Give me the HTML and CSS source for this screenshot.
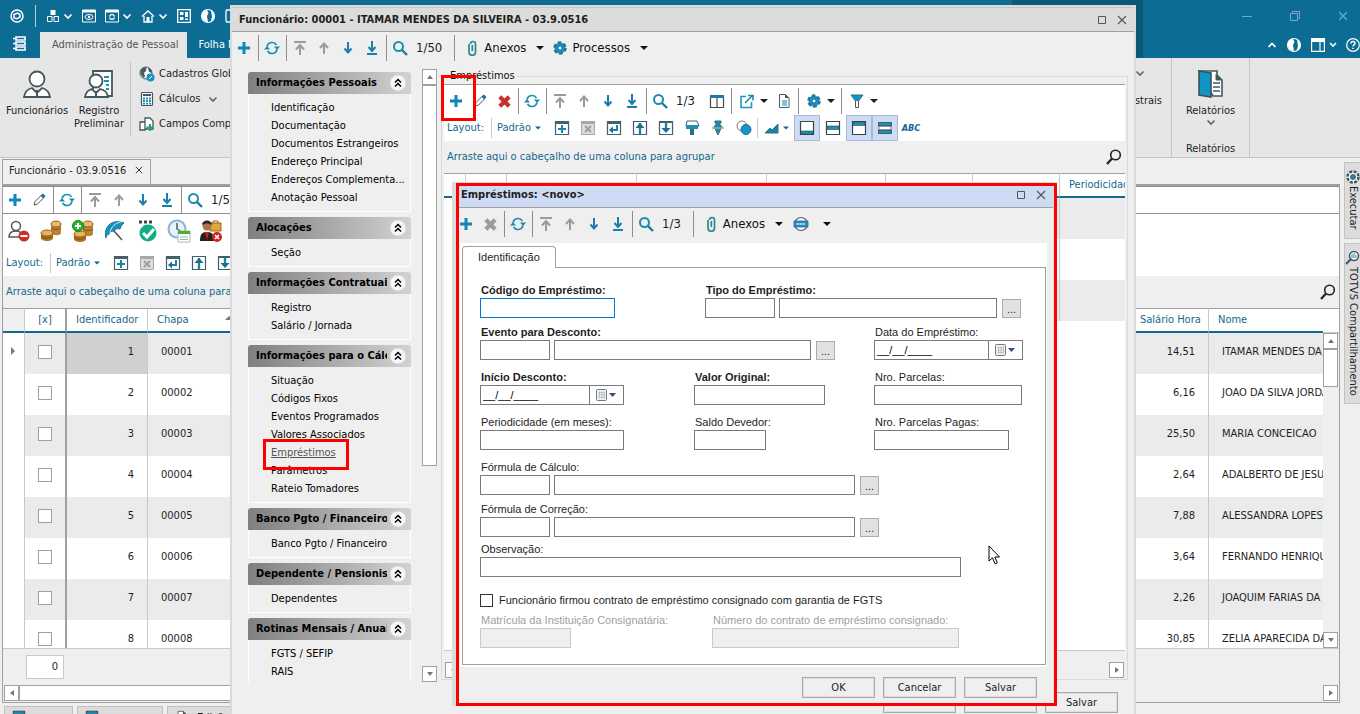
FILE: index.html
```html
<!DOCTYPE html>
<html lang="pt-BR">
	<head>
		<meta charset="utf-8">
		<title>Administração de Pessoal</title>
		<link rel="stylesheet" href="styles.css">
	</head>
	<body>
		<svg class="sprite" aria-hidden="true">
			<symbol id="i-plus" viewBox="0 0 16 16"><path d="M8 2v12M2 8h12" stroke="#0f86b8" stroke-width="3"/></symbol>
			<symbol id="i-pencil" viewBox="0 0 16 16"><path d="M3 13l1-3.500 6-6 2.500 2.500-6 6z" fill="#fff" stroke="#555"/><path d="M10 3.500L12 2l2 2-1.500 2z" fill="#1c7ea8" stroke="#1c6f96"/></symbol>
			<symbol id="i-del" viewBox="0 0 16 16"><path d="M3 3l10 10M13 3L3 13" stroke="currentColor" stroke-width="4.500"/></symbol>
			<symbol id="i-refresh" viewBox="0 0 16 16"><path d="M3 6.500a5.200 5.200 0 0 1 9.500-1.500M13 9.500a5.200 5.200 0 0 1-9.500 1.500" fill="none" stroke="#1b8fb0" stroke-width="1.600"/><path d="M10 6.500h6l-3 3.500zM0 9.500h6L3 6z" fill="#1b8f9c"/></symbol>
			<symbol id="i-first" viewBox="0 0 16 16"><path d="M2 2h12M8 15V6M4 9.500L8 5l4 4.500" fill="none" stroke="#9b9b9b" stroke-width="2"/></symbol>
			<symbol id="i-up" viewBox="0 0 16 16"><path d="M8 14V4M4 8l4-4.500L12 8" fill="none" stroke="#9b9b9b" stroke-width="2"/></symbol>
			<symbol id="i-down" viewBox="0 0 16 16"><path d="M8 2v10M4.500 8.500L8 12.500l3.500-4" fill="none" stroke="#1c7fab" stroke-width="2"/></symbol>
			<symbol id="i-last" viewBox="0 0 16 16"><path d="M8 1v9M4.500 7L8 11l3.500-4M3 14h10" fill="none" stroke="#1c7fab" stroke-width="2"/></symbol>
			<symbol id="i-search" viewBox="0 0 16 16"><circle cx="6.500" cy="6.500" r="4.500" fill="none" stroke="#1b8fa8" stroke-width="2"/><path d="M10 10l5 5" stroke="#1c7b9c" stroke-width="2.400"/></symbol>
			<symbol id="i-clip" viewBox="0 0 16 16"><path d="M5 4v8a3 3 0 0 0 6.500 0V4a2.500 2.500 0 0 0-5 0M8.300 5v6" fill="none" stroke="#2d8793" stroke-width="1.700"/></symbol>
			<symbol id="i-gear" viewBox="0 0 16 16"><circle cx="8" cy="8" r="5.500" fill="#0f96c4"/><circle cx="8" cy="8" r="5.500" fill="none" stroke="#2b7396" stroke-width="2.500" stroke-dasharray="3.500 2.260"/><circle cx="8" cy="8" r="2" fill="#fff" stroke="#2b6d8c"/></symbol>
			<symbol id="i-caret" viewBox="0 0 8 8"><path d="M0 2h8L4 6z" fill="currentColor"/></symbol>
			<symbol id="i-cols" viewBox="0 0 16 16"><path d="M1.500 2.500h13v12h-13zM8 4v10" fill="#fff" stroke="#4a4a4a" stroke-width="1.200"/><path d="M1 2h14v3H1z" fill="#1c7ba5"/></symbol>
			<symbol id="i-export" viewBox="0 0 16 16"><path d="M7 3.500H2v11h10.500V9" fill="none" stroke="#1b9cbd" stroke-width="1.600"/><path d="M6 10l7-7M9 2.500h5v5" fill="none" stroke="#1b8fb0" stroke-width="1.600"/></symbol>
			<symbol id="i-doc" viewBox="0 0 16 16"><path d="M3.500 1.500h6l3.500 3.500v9.500H3.500z" fill="#fff" stroke="#4f5b60"/><path d="M9 1l4 4H9z" fill="#4f5b60"/><path d="M6 7h5v6H6z" fill="#7cc6d6"/></symbol>
			<symbol id="i-funnel" viewBox="0 0 16 16"><path d="M2 2h12L9.500 8h-3z" fill="#0f96c4" stroke="#2b6d8c"/><path d="M6.500 8v6.500h3V8" fill="#fff" stroke="#555"/></symbol>
			<symbol id="i-mag" viewBox="0 0 16 16"><circle cx="9.500" cy="6" r="4.800" fill="none" stroke="#222" stroke-width="1.600"/><path d="M6 9.500L1 15" stroke="#222" stroke-width="2.200"/></symbol>
			<symbol id="i-ladd" viewBox="0 0 16 16"><path d="M1.500 1.500h13v13h-13z" fill="#fff" stroke="#41606b" stroke-width="1.200"/><path d="M1 1h14v3H1z" fill="#41606b"/><path d="M8 5v8M4 9h8" stroke="#1585a8" stroke-width="2"/></symbol>
			<symbol id="i-ldel" viewBox="0 0 16 16"><path d="M1.500 1.500h13v13h-13z" fill="#dcdcdc" stroke="#a8a8a8"/><path d="M1 1h14v3H1z" fill="#a8a8a8"/><path d="M5 6l6 6M11 6l-6 6" stroke="#a0a0a0" stroke-width="2"/></symbol>
			<symbol id="i-lret" viewBox="0 0 16 16"><path d="M1.500 1.500h13v13h-13z" fill="#fff" stroke="#41606b" stroke-width="1.200"/><path d="M1 1h14v3H1z" fill="#41606b"/><path d="M11 5v5H6" fill="none" stroke="#1585a8" stroke-width="2"/><path d="M7 6.500v7L3 10z" fill="#1c6f8c"/></symbol>
			<symbol id="i-lup" viewBox="0 0 16 16"><path d="M1.500 1.500h13v13h-13z" fill="#fff" stroke="#41606b" stroke-width="1.200"/><path d="M8 3v11" stroke="#1585a8" stroke-width="2.400"/><path d="M3.500 8L8 3l4.500 5z" fill="#1c6f8c"/></symbol>
			<symbol id="i-ldown" viewBox="0 0 16 16"><path d="M1.500 1.500h13v13h-13z" fill="#fff" stroke="#41606b" stroke-width="1.200"/><path d="M1 1h14v2H1z" fill="#41606b"/><path d="M8 3v8" stroke="#1585a8" stroke-width="2.400"/><path d="M3.500 8L8 13l4.500-5z" fill="#1c6f8c"/></symbol>
			<symbol id="i-brush" viewBox="0 0 16 16"><path d="M3 1h10l2 5H2z" fill="#fff" stroke="#47626c"/><path d="M2 5h12v4H2z" fill="#1b90b4"/><path d="M6 9h4v6H6z" fill="#276d88"/></symbol>
			<symbol id="i-pin" viewBox="0 0 16 16"><path d="M5 1h6v2h-1v3h2L8 15 4 6h2V3H5z" fill="#1b90b4" stroke="#356b7d"/><path d="M2 8h12" stroke="#9aa" stroke-width="1.500"/></symbol>
			<symbol id="i-circles" viewBox="0 0 16 16"><circle cx="6" cy="6" r="5" fill="#fff" stroke="#777"/><circle cx="10" cy="9.500" r="5" fill="#0f96c4" stroke="#2b6d8c"/></symbol>
			<symbol id="i-chart" viewBox="0 0 16 16"><path d="M1 13l5-5 2 2 6-6v9z" fill="#1585a8" stroke="#356b7d"/></symbol>
			<symbol id="i-pbot" viewBox="0 0 16 16"><path d="M1.500 1.500h13v13h-13z" fill="#fff" stroke="#37474d" stroke-width="1.200"/><path d="M2 11h12v3H2z" fill="#1b90b4" stroke="#37474d" stroke-width=".6"/></symbol>
			<symbol id="i-pmid" viewBox="0 0 16 16"><path d="M1.500 1.500h13v13h-13z" fill="#fff" stroke="#37474d" stroke-width="1.200"/><path d="M2 6h12v3.500H2z" fill="#1b90b4" stroke="#37474d" stroke-width=".6"/></symbol>
			<symbol id="i-ptop" viewBox="0 0 16 16"><path d="M1.500 1.500h13v13h-13z" fill="#fff" stroke="#37474d" stroke-width="1.200"/><path d="M2 2h12v3.500H2z" fill="#1b90b4" stroke="#37474d" stroke-width=".6"/></symbol>
			<symbol id="i-pbars" viewBox="0 0 16 16"><rect x="2" y="6" width="12" height="4" fill="#fff" stroke="#37474d" stroke-width=".6"/><path d="M1.500 2.500h13V6h-13zM1.500 10h13v3.500h-13z" fill="#1b90b4" stroke="#37474d" stroke-width=".8"/></symbol>
			<symbol id="i-www" viewBox="0 0 16 16"><circle cx="8" cy="8" r="6.500" fill="#fff" stroke="#556" stroke-width="1.200"/><path d="M1 5h14v6H1z" fill="#1b90c4" stroke="#37678a" stroke-width=".8"/><path d="M3.500 8h9" fill="none" stroke="#d8eef7" stroke-width="1.600" stroke-dasharray="2.400 .6"/></symbol>
			<symbol id="i-chev" viewBox="0 0 10 10"><path d="M1.500 3.500L5 7l3.500-3.500" fill="none" stroke="currentColor" stroke-width="1.700"/></symbol>
			<symbol id="i-chevup" viewBox="0 0 10 10"><path d="M1.500 7L5 3.500 8.500 7" fill="none" stroke="currentColor" stroke-width="1.700"/></symbol>
			<symbol id="i-globe" viewBox="0 0 16 16"><circle cx="8" cy="8" r="6.500" fill="none" stroke="currentColor" stroke-width="1.200"/><path d="M2 5c1-2 3-3.500 5-3l1.500 3L7 8l1 6C4 14 1 10 2 5zM11 2.500c3 1.500 4 5 3 8l-3.500 3.500 1.500-5z" fill="currentColor"/></symbol>
			<symbol id="i-max" viewBox="0 0 10 10"><path d="M1.500 1.500h7v7h-7z" fill="none" stroke="#555"/></symbol>
			<symbol id="i-close" viewBox="0 0 10 10"><path d="M1 1l8 8M9 1L1 9" stroke="currentColor" stroke-width="1.100"/></symbol>
			<symbol id="i-fold" viewBox="0 0 18 18"><circle cx="9" cy="9" r="8" fill="#f6f6fa" stroke="#d5d5e0"/><path d="M6 8.500l3-3 3 3M6 12.500l3-3 3 3" fill="none" stroke="#000" stroke-width="1.500"/></symbol>
			<symbol id="i-cal" viewBox="0 0 24 16"><rect x="1.500" y="2.500" width="10" height="11" rx="1" fill="#eef2f5" stroke="#7d7673"/><path d="M3.500 5.500h6.500M3.500 8h6.500M3.500 10.500h6.500M4.500 4.500v7M7 4.500v7M9.500 4.500v7" stroke="#a8bac8" stroke-width=".8"/><path d="M14 6h7l-3.500 4z" fill="#34507f"/></symbol>
		</svg>

		<div class="app">
			<header class="topbar">
				<div class="quick">
					<svg width="14" height="14" viewBox="0 0 14 14"><circle cx="7" cy="7" r="6" fill="none" stroke="#fff" stroke-width="1.500"/><path d="M4 9V5.500L7.500 4 10 5.500V8L7 9.800z" fill="none" stroke="#fff" stroke-width="1.500"/></svg>
					<span class="quick-sep"></span>
					<button title="Módulos"><svg width="14" height="14" viewBox="0 0 14 14"><path d="M4.500 1h5v5h-5z" fill="#fff"/><path d="M1.500 7.500h4.500v5H1.500zM8 7.500h4.500v5H8z" fill="none" stroke="#fff"/></svg><svg class="chev"><use href="#i-chev"/></svg></button>
					<button title="Visualizar"><svg width="14" height="14" viewBox="0 0 14 14"><path d="M.5 1h13v12H.5z" fill="none" stroke="#fff"/><path d="M0 1h14v2.500H0z" fill="#fff"/><ellipse cx="7" cy="8" rx="4" ry="2.500" fill="none" stroke="#fff"/><circle cx="7" cy="8" r="1.200" fill="#fff"/></svg></button>
					<button title="Atualizar"><svg width="14" height="14" viewBox="0 0 14 14"><path d="M.5 1h13v12H.5z" fill="none" stroke="#fff"/><path d="M0 1h14v2.500H0z" fill="#fff"/><path d="M4.500 7.500a2.600 2.600 0 0 1 5 0M9.500 8.500a2.600 2.600 0 0 1-5 0" fill="none" stroke="#fff" stroke-width="1.300"/></svg><svg class="chev"><use href="#i-chev"/></svg></button>
					<button title="Início"><svg width="14" height="14" viewBox="0 0 14 14"><path d="M1 7.500L7 2l6 5.500M3 7v6h8V7" fill="none" stroke="#fff" stroke-width="1.300"/><path d="M5.500 8h3v5h-3z" fill="#fff"/></svg><svg class="chev"><use href="#i-chev"/></svg></button>
					<button title="Painel"><svg width="14" height="14" viewBox="0 0 14 14"><path d="M.7.7h12.600v12.600H.7z" fill="none" stroke="#fff" stroke-width="1.300"/><path d="M3 3h3.500v3H3zM3 8h3.500v3H3zM8 3h3v5H8zM8 9.500h3V11H8z" fill="#fff"/></svg></button>
					<button title="Portal"><svg width="16" height="16"><use href="#i-globe"/></svg></button>
					<button title="Janela"><svg width="14" height="14" viewBox="0 0 14 14"><rect x="1" y="1" width="12" height="12" rx="1" fill="none" stroke="#fff" stroke-width="1.300"/></svg></button>
					<div class="win-controls">
						<button title="Minimizar"><svg width="10" height="10" viewBox="0 0 10 10"><path d="M0 5.500h10" stroke="#77a9bf"/></svg></button>
						<button title="Restaurar"><svg width="10" height="10" viewBox="0 0 10 10"><path d="M.5 2.500h7v7h-7zM2.500 2V.5h7v7H8" fill="none" stroke="#77a9bf"/></svg></button>
						<button title="Fechar"><svg width="10" height="10"><use href="#i-close"/></svg></button>
					</div>
				</div>
				<nav class="tabs">
					<button class="menu" title="Menu"><svg width="14" height="16" viewBox="0 0 14 16"><path d="M3 2h9v3H3zM3 7h9v3H3zM3 12h9v3H3z" fill="none" stroke="#fff" stroke-width="1.600"/><path d="M0 3.500h4M0 8.500h4M0 13.500h4" stroke="#fff" stroke-width="1.400"/></svg></button>
					<a class="tab current" href="#">Administração de Pessoal</a>
					<a class="tab" href="#">Folha Mensal</a>
					<div class="tabs-tools">
						<svg class="chev"><use href="#i-chevup"/></svg>
						<svg width="16" height="16"><use href="#i-globe"/></svg>
						<svg width="26" height="14" viewBox="0 0 26 14"><path d="M.6.6h12.800v12.800H.6zM9 4v9" fill="none" stroke="#fff" stroke-width="1.200"/><path d="M0 0h14v4H0z" fill="#fff"/><path d="M19 5l3 3 3-3" fill="none" stroke="#fff" stroke-width="1.600"/></svg>
						<svg width="14" height="14" viewBox="0 0 14 14"><circle cx="7" cy="7" r="6.300" fill="none" stroke="#fff" stroke-width="1.200"/><path d="M5 5.500c0-3 4.200-2.500 4 0C9 7 7 6.800 7 8.500M7 9.800v1.300" fill="none" stroke="#fff" stroke-width="1.500"/></svg>
					</div>
				</nav>
			</header>

			<section class="ribbon">
				<button class="big">
					<svg width="28" height="28" viewBox="0 0 28 28"><path d="M1 27c1-6 4-8 8-9l5 5 5-5c4 1 7 3 8 9z" fill="#fff" stroke="#44575e" stroke-width="1.800"/><circle cx="14" cy="9" r="7.500" fill="#fff" stroke="#44575e" stroke-width="1.800"/><path d="M14 20v6" stroke="#44575e" stroke-width="2"/></svg>
					<span>Funcionários</span>
				</button>
				<button class="big">
					<svg width="30" height="28" viewBox="0 0 30 28"><path d="M9 1h19v25H9z" fill="#fff" stroke="#44575e" stroke-width="1.800"/><path d="M20 7h5M20 11h5M22 15h3M22 19h3" stroke="#1b90b4" stroke-width="1.800"/><path d="M1 27c1-6 4-7 7-8l4 4 4-4c4 1 7 2 8 8z" fill="#fff" stroke="#44575e" stroke-width="1.800"/><circle cx="12" cy="11" r="6.500" fill="#fff" stroke="#44575e" stroke-width="1.800"/><path d="M12 21v5" stroke="#44575e" stroke-width="2"/></svg>
					<span>Registro Preliminar</span>
				</button>
				<div class="ribbon-list">
					<button><svg width="16" height="16" viewBox="0 0 16 16"><circle cx="7" cy="7" r="6" fill="#fff" stroke="#4a5b61"/><path d="M1.500 4c2-3 5-3 6-2.500L7 5 5 7l1 3-1 2C2 10 1 7 1.500 4zM9 2c3 0 4 3 4 5l-3-1z" fill="#4a5b61"/><circle cx="11.500" cy="11.500" r="4" fill="#1b90c4"/><path d="M10 13l3-3" stroke="#fff"/></svg>Cadastros Globais</button>
					<button><svg width="16" height="16" viewBox="0 0 16 16"><rect x="2.500" y="1.500" width="11" height="13" rx="1" fill="#fff" stroke="#44575e" stroke-width="1.200"/><path d="M4 3h8v2H4z" fill="#44575e"/><path d="M5 6.500v7M8 6.500v7M11 6.500v7" stroke="#1b90b4" stroke-width="2" stroke-dasharray="2 .6"/></svg>Cálculos<svg class="chev gray"><use href="#i-chev"/></svg></button>
					<button><svg width="16" height="16" viewBox="0 0 16 16"><path d="M1 6h5v8H1zM6 2h5l3 3v8H6z" fill="#fff" stroke="#44575e" stroke-width="1.300"/><path d="M11 8v7M7.500 11.500h7" stroke="#18a37c" stroke-width="2"/></svg>Campos Complementares</button>
				</div>
				<div class="ribbon-end">
					<svg class="chev gray"><use href="#i-chev"/></svg>
					<span>strais</span>
				</div>
				<div class="ribbon-group">
					<button class="big">
						<svg width="26" height="28" viewBox="0 0 26 28"><path d="M1 1h18v4l5 5v16h-9z" fill="#fff" stroke="#44575e" stroke-width="1.600"/><path d="M1 1l12 2v24L1 25z" fill="#0f96c4" stroke="#3c525a" stroke-width="1.600"/><path d="M18 4v6h6" fill="#44575e" stroke="#44575e"/><path d="M15 13h7M15 17h7M15 21h7" stroke="#44575e" stroke-width="1.500"/></svg>
						<span>Relatórios</span>
						<svg class="chev gray"><use href="#i-chev"/></svg>
					</button>
					<span>Relatórios</span>
				</div>
			</section>

			<main class="workspace">
				<div class="doc">
					<div class="doc-tab">Funcionário - 03.9.0516 <svg width="8" height="8"><use href="#i-close"/></svg></div>
					<div class="doc-panel">
						<div class="toolbar boxed">
							<button title="Incluir"><svg><use href="#i-plus"/></svg></button>
							<button title="Editar"><svg><use href="#i-pencil"/></svg></button>
							<span class="sep"></span>
							<button title="Atualizar"><svg><use href="#i-refresh"/></svg></button>
							<span class="sep"></span>
							<button title="Primeiro"><svg><use href="#i-first"/></svg></button>
							<button title="Anterior"><svg><use href="#i-up"/></svg></button>
							<button title="Próximo"><svg><use href="#i-down"/></svg></button>
							<button title="Último"><svg><use href="#i-last"/></svg></button>
							<span class="sep"></span>
							<button title="Localizar"><svg><use href="#i-search"/></svg></button>
							<span class="pos">1/50</span>
						</div>
						<div class="actions">
							<svg viewBox="0 0 24 24"><path d="M2 18c0-4 3-6 7-6s6 2 6 6z" fill="#fff" stroke="#555" stroke-width="1.500"/><circle cx="9" cy="7" r="4.500" fill="#fff" stroke="#555" stroke-width="1.500"/><circle cx="17" cy="17" r="5.500" fill="#c9302c"/><path d="M13.500 17h7" stroke="#fff" stroke-width="2"/></svg>
							<svg viewBox="0 0 24 24"><path d="M12 5v9c0 3 10 3 10 0V5z" fill="#bd8330"/><ellipse cx="17" cy="5" rx="5" ry="3" fill="#e9bc6c" stroke="#96611b"/><path d="M2 14v5c0 4 12 4 12 0v-5z" fill="#ad7422"/><path d="M2 17c3 3 9 3 12 0M12 9c3 2 7 2 10 0" fill="none" stroke="#7c4c12"/><ellipse cx="8" cy="14" rx="6" ry="3" fill="#e7b65c" stroke="#96611b"/></svg>
							<svg viewBox="0 0 24 24"><path d="M12 5v10c0 3 10 3 10 0V5z" fill="#bd8330"/><ellipse cx="17" cy="5" rx="5" ry="3" fill="#e9bc6c" stroke="#96611b"/><path d="M3 15v5c0 4 12 4 12 0v-5z" fill="#ad7422"/><path d="M3 18c3 3 9 3 12 0M12 10c3 2 7 2 10 0" fill="none" stroke="#7c4c12"/><ellipse cx="9" cy="15" rx="6" ry="3" fill="#e7b65c" stroke="#96611b"/><circle cx="7" cy="7" r="5.500" fill="#26b52e" stroke="#15831c"/><path d="M7 4v6M4 7h6" stroke="#fff" stroke-width="2"/></svg>
							<svg viewBox="0 0 24 24"><path d="M3 19C0 9 8-1 21 4c-2 1-3 3-4 6-3-1-4 0-6 2-3 0-4 1-5 3-2 1-3 2-3 4z" fill="#1592bd" stroke="#1a7494"/><path d="M7 14C8 8 12 4 18 3" fill="none" stroke="#d6edf5"/><path d="M11 12l8 9" stroke="#555" stroke-width="1.600"/></svg>
							<svg viewBox="0 0 24 24"><path d="M4 3h13" stroke="#444" stroke-width="3" stroke-dasharray="3 2"/><circle cx="13" cy="14" r="8.500" fill="#12ad84"/><path d="M8 14l4 4 7-8" fill="none" stroke="#fff" stroke-width="3"/></svg>
							<svg viewBox="0 0 24 24"><circle cx="10" cy="10" r="8.500" fill="#e8f2fb" stroke="#8fb2d2" stroke-width="2"/><path d="M10 4v6l5 3" fill="none" stroke="#345" stroke-width="1.300"/><path d="M11 12h12v11H11z" fill="#fff" stroke="#a9b5bd"/><path d="M11 12h12v3H11z" fill="#47b02d"/><path d="M13 18h8M13 20.500h8" stroke="#9bb59b"/></svg>
							<svg viewBox="0 0 24 24"><path d="M11 4h11v8H11z" fill="#e0a73c" stroke="#93651a"/><path d="M14 4V2h5v2" fill="none" stroke="#93651a"/><path d="M1 22c0-7 2-9 7-9s7 2 7 9z" fill="#28221f"/><path d="M6 13h4l-2 8z" fill="#c22"/><circle cx="8" cy="7" r="4.500" fill="#a9734f"/><path d="M3 6c0-6 10-6 10 0-3-2-6-2-10 0z" fill="#3c2416"/><circle cx="18" cy="18" r="5" fill="#d32020"/><path d="M16 16l4 4M20 16l-4 4" stroke="#fff" stroke-width="1.600"/></svg>
						</div>
						<div class="layoutbar">
							<span class="layout-label">Layout:</span>
							<button class="layout-name">Padrão<svg class="caret"><use href="#i-caret"/></svg></button>
							<button title="Novo layout"><svg><use href="#i-ladd"/></svg></button>
							<button title="Excluir layout"><svg><use href="#i-ldel"/></svg></button>
							<button title="Restaurar"><svg><use href="#i-lret"/></svg></button>
							<button title="Exportar"><svg><use href="#i-lup"/></svg></button>
							<button title="Importar"><svg><use href="#i-ldown"/></svg></button>
						</div>
						<div class="groupbar">Arraste aqui o cabeçalho de uma coluna para agrupar <svg><use href="#i-mag"/></svg></div>
						<div class="grid">
							<table class="people">
								<colgroup>
									<col class="c-mark"><col class="c-check"><col class="c-id"><col class="c-chapa"><col><col class="c-sal"><col class="c-name">
								</colgroup>
								<thead>
									<tr><th></th><th class="center thick">[x]</th><th>Identificador</th><th>Chapa <svg class="sort" viewBox="0 0 8 8"><path d="M0 6h8L4 2z" fill="#777"/></svg></th><th></th><th>Salário Hora</th><th>Nome</th></tr>
								</thead>
								<tbody>
									<tr><td class="mark"><svg width="6" height="8" viewBox="0 0 6 8"><path d="M1 0v8l4-4z" fill="#777"/></svg></td><td class="center thick"><input type="checkbox" aria-label="Selecionar 00001"></td><td class="num picked">1</td><td>00001</td><td></td><td class="num">14,51</td><td>ITAMAR MENDES DA SILVEIRA</td></tr>
									<tr><td class="mark"></td><td class="center thick"><input type="checkbox" aria-label="Selecionar 00002"></td><td class="num">2</td><td>00002</td><td></td><td class="num">6,16</td><td>JOAO DA SILVA JORDAO</td></tr>
									<tr><td class="mark"></td><td class="center thick"><input type="checkbox" aria-label="Selecionar 00003"></td><td class="num">3</td><td>00003</td><td></td><td class="num">25,50</td><td>MARIA CONCEICAO</td></tr>
									<tr><td class="mark"></td><td class="center thick"><input type="checkbox" aria-label="Selecionar 00004"></td><td class="num">4</td><td>00004</td><td></td><td class="num">2,64</td><td>ADALBERTO DE JESUS</td></tr>
									<tr><td class="mark"></td><td class="center thick"><input type="checkbox" aria-label="Selecionar 00005"></td><td class="num">5</td><td>00005</td><td></td><td class="num">7,88</td><td>ALESSANDRA LOPES</td></tr>
									<tr><td class="mark"></td><td class="center thick"><input type="checkbox" aria-label="Selecionar 00006"></td><td class="num">6</td><td>00006</td><td></td><td class="num">3,64</td><td>FERNANDO HENRIQUE</td></tr>
									<tr><td class="mark"></td><td class="center thick"><input type="checkbox" aria-label="Selecionar 00007"></td><td class="num">7</td><td>00007</td><td></td><td class="num">2,26</td><td>JOAQUIM FARIAS DA</td></tr>
									<tr><td class="mark"></td><td class="center thick"><input type="checkbox" aria-label="Selecionar 00008"></td><td class="num">8</td><td>00008</td><td></td><td class="num">30,85</td><td>ZELIA APARECIDA DA</td></tr>
								</tbody>
							</table>
							<div class="grid-side">
								<div class="grid-corner"></div>
								<div class="vscroll">
									<button class="arrow" title="Acima"><svg viewBox="0 0 8 8"><path d="M1 6h6L4 2z" fill="#777"/></svg></button>
									<div class="thumb short"></div>
									<button class="arrow end" title="Abaixo"><svg viewBox="0 0 8 8"><path d="M1 2h6L4 6z" fill="#777"/></svg></button>
								</div>
							</div>
						</div>
						<div class="grid-total"><span>0</span></div>
						<div class="hscroll">
							<button class="arrow" title="Esquerda"><svg viewBox="0 0 8 8"><path d="M6 1v6L2 4z" fill="#777"/></svg></button>
							<div class="hthumb"></div>
							<button class="arrow" title="Direita"><svg viewBox="0 0 8 8"><path d="M2 1v6l4-3z" fill="#777"/></svg></button>
						</div>
					</div>
					<div class="doc-foot">
						<span class="foot-tab"><svg><use href="#i-ptop"/></svg></span>
						<span class="foot-tab wide"><svg><use href="#i-ptop"/></svg></span>
						<span class="foot-tab wide"><svg><use href="#i-doc"/></svg>Edição</span>
					</div>
				</div>
				<aside class="dock">
					<a href="#"><svg viewBox="0 0 16 16"><circle cx="8" cy="8" r="5.500" fill="#fff" stroke="#44575e" stroke-width="2.500" stroke-dasharray="3 1.300"/><circle cx="8" cy="8" r="2.500" fill="#1b90b4" stroke="#44575e"/></svg>Executar</a>
					<a href="#"><svg viewBox="0 0 16 16"><circle cx="9" cy="6" r="4.500" fill="#fff" stroke="#44575e" stroke-width="1.500"/><path d="M7 4v4M9 3v5M11 5v3" stroke="#1b90b4"/><path d="M6 9l-5 5" stroke="#44575e" stroke-width="2"/></svg>TOTVS Compartilhamento</a>
				</aside>
			</main>
		</div>

		<!-- cadastro do funcionário -->
		<section class="window employee">
			<h1 class="win-title">Funcionário: 00001 - ITAMAR MENDES DA SILVEIRA - 03.9.0516
				<span class="win-btns"><svg><use href="#i-max"/></svg><svg><use href="#i-close"/></svg></span>
			</h1>
			<div class="toolbar">
				<button title="Incluir"><svg><use href="#i-plus"/></svg></button>
				<span class="sep"></span>
				<button title="Atualizar"><svg><use href="#i-refresh"/></svg></button>
				<span class="sep"></span>
				<button title="Primeiro"><svg><use href="#i-first"/></svg></button>
				<button title="Anterior"><svg><use href="#i-up"/></svg></button>
				<button title="Próximo"><svg><use href="#i-down"/></svg></button>
				<button title="Último"><svg><use href="#i-last"/></svg></button>
				<span class="sep"></span>
				<button title="Localizar"><svg><use href="#i-search"/></svg></button>
				<span class="pos">1/50</span>
				<span class="sep far"></span>
				<button class="menu-btn"><svg><use href="#i-clip"/></svg>Anexos<svg class="caret"><use href="#i-caret"/></svg></button>
				<button class="menu-btn"><svg><use href="#i-gear"/></svg>Processos<svg class="caret"><use href="#i-caret"/></svg></button>
			</div>
			<div class="employee-body">
				<nav class="side">
					<div class="side-group">
						<h2><span>Informações Pessoais</span><svg><use href="#i-fold"/></svg></h2>
						<ul>
							<li><a href="#">Identificação</a></li>
							<li><a href="#">Documentação</a></li>
							<li><a href="#">Documentos Estrangeiros</a></li>
							<li><a href="#">Endereço Principal</a></li>
							<li><a href="#">Endereços Complementa...</a></li>
							<li><a href="#">Anotação Pessoal</a></li>
						</ul>
					</div>
					<div class="side-group">
						<h2><span>Alocações</span><svg><use href="#i-fold"/></svg></h2>
						<ul>
							<li><a href="#">Seção</a></li>
						</ul>
					</div>
					<div class="side-group">
						<h2><span>Informações Contratuais</span><svg><use href="#i-fold"/></svg></h2>
						<ul>
							<li><a href="#">Registro</a></li>
							<li><a href="#">Salário / Jornada</a></li>
						</ul>
					</div>
					<div class="side-group">
						<h2><span>Informações para o Cálculo</span><svg><use href="#i-fold"/></svg></h2>
						<ul>
							<li><a href="#">Situação</a></li>
							<li><a href="#">Códigos Fixos</a></li>
							<li><a href="#">Eventos Programados</a></li>
							<li><a href="#">Valores Associados</a></li>
							<li><a class="current" href="#">Empréstimos</a></li>
							<li><a href="#">Parâmetros</a></li>
							<li><a href="#">Rateio Tomadores</a></li>
						</ul>
					</div>
					<div class="side-group">
						<h2><span>Banco Pgto / Financeiro</span><svg><use href="#i-fold"/></svg></h2>
						<ul>
							<li><a href="#">Banco Pgto / Financeiro</a></li>
						</ul>
					</div>
					<div class="side-group">
						<h2><span>Dependente / Pensionista</span><svg><use href="#i-fold"/></svg></h2>
						<ul>
							<li><a href="#">Dependentes</a></li>
						</ul>
					</div>
					<div class="side-group">
						<h2><span>Rotinas Mensais / Anuais</span><svg><use href="#i-fold"/></svg></h2>
						<ul>
							<li><a href="#">FGTS / SEFIP</a></li>
							<li><a href="#">RAIS</a></li>
						</ul>
					</div>
				</nav>
				<div class="vscroll side-scroll">
					<button class="arrow" title="Acima"><svg viewBox="0 0 8 8"><path d="M1 6h6L4 2z" fill="#777"/></svg></button>
					<div class="thumb long"></div>
					<button class="arrow end" title="Abaixo"><svg viewBox="0 0 8 8"><path d="M1 2h6L4 6z" fill="#777"/></svg></button>
				</div>
				<fieldset class="loans">
					<legend>Empréstimos</legend>
					<div class="loans-bars">
						<div class="toolbar">
							<button title="Incluir"><svg><use href="#i-plus"/></svg></button>
							<button title="Editar"><svg><use href="#i-pencil"/></svg></button>
							<button title="Excluir" class="red"><svg class="small"><use href="#i-del"/></svg></button>
							<span class="sep"></span>
							<button title="Atualizar"><svg><use href="#i-refresh"/></svg></button>
							<span class="sep"></span>
							<button title="Primeiro"><svg><use href="#i-first"/></svg></button>
							<button title="Anterior"><svg><use href="#i-up"/></svg></button>
							<button title="Próximo"><svg><use href="#i-down"/></svg></button>
							<button title="Último"><svg><use href="#i-last"/></svg></button>
							<span class="sep"></span>
							<button title="Localizar"><svg><use href="#i-search"/></svg></button>
							<span class="pos">1/3</span>
							<button title="Colunas" class="cols-btn"><svg><use href="#i-cols"/></svg></button>
							<span class="sep"></span>
							<button class="drop" title="Exportar"><svg><use href="#i-export"/></svg><svg class="caret"><use href="#i-caret"/></svg></button>
							<button title="Relatório"><svg><use href="#i-doc"/></svg></button>
							<span class="sep"></span>
							<button class="drop" title="Processos"><svg><use href="#i-gear"/></svg><svg class="caret"><use href="#i-caret"/></svg></button>
							<span class="sep"></span>
							<button class="drop" title="Filtro"><svg><use href="#i-funnel"/></svg><svg class="caret"><use href="#i-caret"/></svg></button>
						</div>
						<div class="layoutbar">
							<span class="layout-label">Layout:</span>
							<button class="layout-name">Padrão<svg class="caret"><use href="#i-caret"/></svg></button>
							<button title="Novo layout"><svg><use href="#i-ladd"/></svg></button>
							<button title="Excluir layout"><svg><use href="#i-ldel"/></svg></button>
							<button title="Restaurar"><svg><use href="#i-lret"/></svg></button>
							<button title="Exportar"><svg><use href="#i-lup"/></svg></button>
							<button title="Importar"><svg><use href="#i-ldown"/></svg></button>
							<button title="Formatar"><svg><use href="#i-brush"/></svg></button>
							<button title="Fixar"><svg><use href="#i-pin"/></svg></button>
							<button title="Condição"><svg><use href="#i-circles"/></svg></button>
							<span class="sep light"></span>
							<button class="chart-btn" title="Gráfico"><svg><use href="#i-chart"/></svg><svg class="caret"><use href="#i-caret"/></svg></button>
							<button class="on" title="Rodapé"><svg><use href="#i-pbot"/></svg></button>
							<button title="Totais"><svg><use href="#i-pmid"/></svg></button>
							<button class="on" title="Agrupar"><svg><use href="#i-ptop"/></svg></button>
							<button class="on" title="Linhas"><svg><use href="#i-pbars"/></svg></button>
							<button class="abc" title="Ortografia">ABC</button>
						</div>
					</div>
					<div class="groupbar">Arraste aqui o cabeçalho de uma coluna para agrupar <svg><use href="#i-mag"/></svg></div>
					<div class="loans-grid">
						<table>
							<colgroup><col class="l-a"><col class="l-b"><col class="l-c"><col class="l-c"><col class="l-d"><col class="l-e"><col class="l-e"><col></colgroup>
							<thead><tr><th></th><th></th><th></th><th></th><th></th><th></th><th></th><th>Periodicidade</th></tr></thead>
							<tbody>
								<tr><td></td><td></td><td></td><td></td><td></td><td></td><td></td><td></td></tr>
								<tr><td></td><td></td><td></td><td></td><td></td><td></td><td></td><td></td></tr>
								<tr><td></td><td></td><td></td><td></td><td></td><td></td><td></td><td></td></tr>
							</tbody>
						</table>
					</div>
					<div class="hscroll loans-scroll">
						<button class="arrow" title="Esquerda"><svg viewBox="0 0 8 8"><path d="M6 1v6L2 4z" fill="#777"/></svg></button>
						<button class="arrow" title="Direita"><svg viewBox="0 0 8 8"><path d="M2 1v6l4-3z" fill="#777"/></svg></button>
					</div>
				</fieldset>
			</div>
			<div class="win-foot">
				<button class="btn">OK</button>
				<button class="btn">Cancelar</button>
				<button class="btn">Salvar</button>
			</div>
		</section>

		<!-- novo empréstimo -->
		<section class="window loan">
			<h1 class="win-title">Empréstimos: &lt;novo&gt;
				<span class="win-btns"><svg><use href="#i-max"/></svg><svg><use href="#i-close"/></svg></span>
			</h1>
			<div class="toolbar">
				<button title="Incluir"><svg><use href="#i-plus"/></svg></button>
				<button title="Excluir" class="off"><svg class="small"><use href="#i-del"/></svg></button>
				<span class="sep"></span>
				<button title="Atualizar"><svg><use href="#i-refresh"/></svg></button>
				<span class="sep"></span>
				<button title="Primeiro"><svg><use href="#i-first"/></svg></button>
				<button title="Anterior"><svg><use href="#i-up"/></svg></button>
				<button title="Próximo"><svg><use href="#i-down"/></svg></button>
				<button title="Último"><svg><use href="#i-last"/></svg></button>
				<span class="sep"></span>
				<button title="Localizar"><svg><use href="#i-search"/></svg></button>
				<span class="pos">1/3</span>
				<span class="sep far"></span>
				<button class="menu-btn"><svg><use href="#i-clip"/></svg>Anexos<svg class="caret"><use href="#i-caret"/></svg></button>
				<button class="menu-btn www" title="Web"><svg><use href="#i-www"/></svg><svg class="caret"><use href="#i-caret"/></svg></button>
			</div>
			<form class="loan-form">
				<a class="form-tab" href="#">Identificação</a>
				<div class="form-panel">
					<div class="field-row two">
						<div class="field req">
							<label for="codigo">Código do Empréstimo:</label>
							<div class="line"><input class="w-code focus" id="codigo" type="text"></div>
						</div>
						<div class="field req">
							<label for="tipo">Tipo do Empréstimo:</label>
							<div class="line"><input class="w-key" id="tipo" type="text"><input class="w-type" type="text" aria-label="Descrição do tipo"><button type="button" class="more">...</button></div>
						</div>
					</div>
					<div class="field-row spaced">
						<div class="field req span2">
							<label for="evento">Evento para Desconto:</label>
							<div class="line"><input class="w-key" id="evento" type="text"><input class="w-event" type="text" aria-label="Descrição do evento"><button type="button" class="more">...</button></div>
						</div>
						<div class="field">
							<label for="data">Data do Empréstimo:</label>
							<div class="date wide"><input id="data" type="text" value="__/__/____"><button type="button" title="Calendário"><svg><use href="#i-cal"/></svg></button></div>
						</div>
					</div>
					<div class="field-row spaced">
						<div class="field req">
							<label for="inicio">Início Desconto:</label>
							<div class="date"><input id="inicio" type="text" value="__/__/____"><button type="button" title="Calendário"><svg><use href="#i-cal"/></svg></button></div>
						</div>
						<div class="field req">
							<label for="valor">Valor Original:</label>
							<div class="line"><input class="w-value" id="valor" type="text"></div>
						</div>
						<div class="field">
							<label for="parcelas">Nro. Parcelas:</label>
							<div class="line"><input class="w-parc" id="parcelas" type="text"></div>
						</div>
					</div>
					<div class="field-row spaced">
						<div class="field">
							<label for="periodo">Periodicidade (em meses):</label>
							<div class="line"><input class="w-period" id="periodo" type="text"></div>
						</div>
						<div class="field">
							<label for="saldo">Saldo Devedor:</label>
							<div class="line"><input class="w-saldo" id="saldo" type="text"></div>
						</div>
						<div class="field">
							<label for="pagas">Nro. Parcelas Pagas:</label>
							<div class="line"><input class="w-code" id="pagas" type="text"></div>
						</div>
					</div>
					<div class="field-row">
						<div class="field span3">
							<label for="calculo">Fórmula de Cálculo:</label>
							<div class="line"><input class="w-key" id="calculo" type="text"><input class="w-formula" type="text" aria-label="Descrição da fórmula de cálculo"><button type="button" class="more">...</button></div>
						</div>
					</div>
					<div class="field-row tight">
						<div class="field span3">
							<label for="correcao">Fórmula de Correção:</label>
							<div class="line"><input class="w-key" id="correcao" type="text"><input class="w-formula" type="text" aria-label="Descrição da fórmula de correção"><button type="button" class="more">...</button></div>
						</div>
					</div>
					<div class="field-row">
						<div class="field span3">
							<label for="obs">Observação:</label>
							<div class="line"><input class="w-obs" id="obs" type="text"></div>
						</div>
					</div>
					<label class="check"><input type="checkbox">Funcionário firmou contrato de empréstimo consignado com garantia de FGTS</label>
					<div class="field-row two disabled">
						<div class="field">
							<label for="matricula">Matrícula da Instituição Consignatária:</label>
							<div class="line"><input class="w-mat" id="matricula" type="text" disabled></div>
						</div>
						<div class="field">
							<label for="numero">Número do contrato de empréstimo consignado:</label>
							<div class="line"><input class="w-num" id="numero" type="text" disabled></div>
						</div>
					</div>
				</div>
			</form>
			<div class="win-foot">
				<button class="btn">OK</button>
				<button class="btn">Cancelar</button>
				<button class="btn">Salvar</button>
			</div>
		</section>

		<!-- destaques -->
		<div class="hl hl-add"></div>
		<div class="hl hl-menu"></div>
		<div class="hl hl-loan"></div>
		<svg class="cursor" viewBox="0 0 12 20"><path d="M1 1v15l3.500-3.200 2.500 6 2.300-1-2.500-5.800H11.500z" fill="#fff" stroke="#000"/></svg>
	</body>
</html>
```
FILE: styles.css
```css
*{
	box-sizing: border-box;
	margin: 0;
	padding: 0;
}
html,body{
	width: 100%;
	height: 100%;
	overflow: hidden;
}
body{
	position: relative;
	font-family: "DejaVu Sans Condensed", "Noto Sans", sans-serif;
	font-size: 11px;
	line-height: 16px;
	color: #1e1e1e;
	background: #efefef;
}
ul{
	list-style: none;
}
a{
	color: inherit;
	text-decoration: none;
}
button{
	font: inherit;
	color: inherit;
	border: 0;
	background: none;
}
input{
	font: inherit;
}
table{
	width: 100%;
	border-collapse: separate;
	border-spacing: 0;
	table-layout: fixed;
}
svg{
	flex: none;
}
.sprite{
	position: absolute;
	width: 0;
	height: 0;
}
.app{
	display: flex;
	flex-direction: column;
	height: 100%;
}
.chev{
	width: 10px;
	height: 10px;
}
.caret{
	width: 8px;
	height: 8px;
}
.gray{
	color: #666;
}

/* barra superior */
.topbar{
	color: #fff;
	background: linear-gradient(#0b5877, #0b5877) right 217px top / 131px 100% no-repeat #0c6c93;
}
.quick{
	display: flex;
	align-items: center;
	height: 32px;
	padding-left: 10px;
}
.quick button{
	display: flex;
	align-items: center;
	gap: 3px;
	margin-right: 9px;
	color: #fff;
}
.quick-sep{
	width: 1px;
	height: 22px;
	margin: 0 10px 0 11px;
	background: #b5d0dc;
}
.win-controls{
	display: flex;
	gap: 38px;
	margin-left: auto;
	padding-right: 12px;
}
.quick .win-controls button{
	margin: 0;
	color: #77a9bf;
}
.tabs{
	display: flex;
	align-items: stretch;
	height: 26px;
}
.menu{
	width: 40px;
}
.tab{
	padding: 5px 8px 5px 12px;
	white-space: nowrap;
}
.tab.current{
	color: #555;
	background: #e6e6e6;
}
.tabs-tools{
	display: flex;
	align-items: center;
	gap: 9px;
	margin-left: auto;
}

/* faixa de comandos */
.ribbon{
	display: flex;
	height: 100px;
	padding-top: 4px;
	background: #e6e6e6;
	border-bottom: 1px solid #c6c6c6;
}
.big{
	display: flex;
	flex-direction: column;
	align-items: center;
	padding-top: 8px;
	line-height: 13px;
}
.big span{
	margin-top: 6px;
}
.ribbon > .big{
	width: 54px;
}
.ribbon > .big:first-child{
	width: 72px;
	padding-left: 2px;
}
.ribbon-list{
	display: flex;
	flex-direction: column;
	gap: 9px;
	height: 74px;
	margin-left: 4px;
	padding: 4px 8px;
	border-left: 1px solid #c3c3c3;
}
.ribbon-list button{
	display: flex;
	align-items: center;
	gap: 4px;
	white-space: nowrap;
}
.ribbon-list .chev{
	margin-left: 4px;
}
.ribbon-end{
	display: flex;
	flex-direction: column;
	align-items: flex-start;
	gap: 15px;
	margin: -4px 0 0 auto;
	padding: 10px 9px 0 0;
	border-right: 1px solid #c6c6c6;
}
.ribbon-group{
	display: flex;
	flex-direction: column;
	align-items: center;
	justify-content: space-between;
	width: 78px;
	margin: -4px 110px 0 0;
	padding-top: 4px;
	border-right: 1px solid #c6c6c6;
}

/* documento */
.workspace{
	display: flex;
	flex: 1;
	min-height: 0;
}
.doc{
	display: flex;
	flex-direction: column;
	flex: 1;
	min-width: 0;
	padding-left: 2px;
}
.doc-tab{
	align-self: flex-start;
	height: 25px;
	margin-top: 1px;
	padding: 3px 7px 4px 6px;
	border: 1px solid #a0a0a0;
	border-bottom: 0;
}
.doc-tab svg{
	margin-left: 6px;
}
.doc-panel{
	display: flex;
	flex-direction: column;
	flex: 1;
	min-height: 0;
	border: 1px solid #a0a0a0;
	border-top-width: 2px;
	background: #fff;
}
.toolbar{
	display: flex;
	align-items: center;
	height: 30px;
	padding-top: 2px;
	font-size: 13px;
}
.toolbar button{
	display: flex;
	align-items: center;
	justify-content: center;
	width: 24px;
	height: 24px;
}
.toolbar button svg{
	width: 16px;
	height: 16px;
}
.toolbar button .small{
	width: 15px;
	height: 15px;
}
.toolbar button .caret{
	width: 8px;
	height: 8px;
}
.layoutbar button .caret{
	width: 6px;
	height: 6px;
}
.toolbar .red{
	color: #c9302c;
}
.toolbar .off{
	color: #9b9b9b;
}
.toolbar .menu-btn{
	gap: 4px;
	width: auto;
	margin-left: 8px;
	color: #111;
}
.menu-btn .caret{
	margin-left: 6px;
}
.toolbar .drop{
	gap: 5px;
	width: auto;
	padding: 0 4px 0 6px;
}
.sep{
	width: 1px;
	height: 26px;
	margin: 0 1px 0 2px;
	background: #8e8e8e;
}
.sep.far{
	margin-left: 12px;
}
.pos{
	padding-left: 4px;
}
.boxed{
	height: 28px;
	padding-top: 0;
	border: 1px solid #8e8e8e;
	border-width: 1px 0;
}
.actions{
	display: flex;
	gap: 8px;
	height: 36px;
	padding: 5px 4px;
}
.actions svg{
	width: 24px;
	height: 24px;
}
.layoutbar{
	display: flex;
	align-items: center;
	height: 26px;
	padding-left: 3px;
	color: #14688c;
}
.layoutbar button{
	display: flex;
	align-items: center;
	justify-content: center;
	width: 26px;
	height: 26px;
}
.layoutbar button svg{
	width: 16px;
	height: 16px;
}
.layoutbar .layout-name{
	gap: 4px;
	width: 54px;
	margin-right: 3px;
}
.layout-label{
	width: 45px;
	border-right: 1px solid #c9c9c9;
	line-height: 20px;
}
.layoutbar .on{
	background: #cedbf5;
	border: 1px solid #a9b8d6;
}
.layoutbar .chart-btn{
	gap: 3px;
	width: 36px;
}
.layoutbar .abc{
	font-size: 9px;
	font-weight: bold;
	font-style: italic;
}
.sep.light{
	height: 20px;
	margin: 0;
	background: #c9c9c9;
}
.groupbar{
	display: flex;
	align-items: center;
	justify-content: space-between;
	height: 32px;
	padding: 0 3px;
	color: #14688c;
	background: #efefef;
}
.groupbar svg{
	width: 16px;
	height: 16px;
}
th{
	height: 25px;
	padding-left: 9px;
	overflow: hidden;
	font-weight: normal;
	text-align: left;
	white-space: nowrap;
	color: #14688c;
	background: #fff;
	border-top: 1px solid #a0a0a0;
	border-right: 1px solid #c9c9c9;
	border-bottom: 2px solid #14688c;
}
.grid{
	display: flex;
	flex: 1;
	min-height: 0;
	overflow: hidden;
}
.people{
	flex: 1;
	align-self: flex-start;
	min-width: 0;
}
.c-mark{ width: 22px; }
.c-check{ width: 42px; }
.c-id{ width: 81px; }
.c-chapa{ width: 88px; }
.c-sal{ width: 74px; }
.c-name{ width: 114px; }
.people th:nth-child(6){
	padding-left: 5px;
}
.people td{
	height: 41px;
	padding: 0 0 3px 13px;
	overflow: hidden;
	white-space: nowrap;
	border-right: 1px solid #c9c9c9;
}
.people tr:nth-child(odd) td{
	background: #ebebeb;
}
.people tr:nth-child(n) .mark{
	padding-left: 7px;
	background: #fff;
}
.people .center{
	padding-left: 0;
	text-align: center;
}
.people .thick{
	border-right: 2px solid #a0a0a0;
}
.people .num{
	padding-right: 13px;
	padding-left: 0;
	text-align: right;
}
.people tr:first-child .picked{
	background: #d0d0d0;
}
.people td:last-child,
.people th:last-child{
	border-right: 0;
}
.people th:first-child{
	background: #efefef;
}
.people input{
	width: 14px;
	height: 14px;
	appearance: none;
	vertical-align: middle;
	background: #fff;
	border: 1px solid #a0a0a0;
}
.sort{
	float: right;
	width: 8px;
	height: 8px;
	margin: 2px 2px 0 0;
}
.grid-side{
	display: flex;
	flex-direction: column;
	width: 16px;
	background: #efefef;
}
.grid-corner{
	height: 25px;
	background: #fff;
	border-top: 1px solid #a0a0a0;
	border-bottom: 1px solid #c9c9c9;
}
.vscroll{
	display: flex;
	flex-direction: column;
	flex: 1;
}
.arrow{
	display: flex;
	align-items: center;
	justify-content: center;
	width: 15px;
	height: 16px;
	background: #fff;
	border: 1px solid #a0a0a0;
}
.arrow svg{
	width: 8px;
	height: 8px;
}
.arrow.end{
	margin-top: auto;
}
.thumb{
	width: 15px;
	background: #fff;
	border: 1px solid #a0a0a0;
}
.thumb.short{
	height: 38px;
}
.thumb.long{
	height: 381px;
}
.grid-total{
	height: 37px;
	padding: 6px 23px;
	background: #efefef;
	border-top: 1px solid #c9c9c9;
}
.grid-total span{
	display: block;
	width: 38px;
	height: 24px;
	padding: 3px 5px;
	text-align: right;
	background: #fff;
	border: 1px solid #c9c9c9;
}
.hscroll{
	display: flex;
	height: 17px;
	padding: 0 1px;
	background: #efefef;
}
.hthumb{
	flex: 1;
	height: 16px;
	margin-right: 200px;
	background: #fff;
	border: 1px solid #a0a0a0;
}
.doc-foot{
	display: flex;
	gap: 4px;
	height: 11px;
	padding: 3px 2px 0;
}
.foot-tab{
	display: flex;
	gap: 8px;
	width: 69px;
	height: 22px;
	padding: 3px 7px;
	background: #dcdcdc;
	border: 1px solid #c0c0c0;
}
.foot-tab.wide{
	width: 86px;
}
.foot-tab svg{
	width: 14px;
	height: 14px;
}
.dock{
	display: flex;
	flex-direction: column;
	gap: 4px;
	width: 20px;
	padding: 4px 0 0 4px;
}
.dock a{
	display: flex;
	align-items: center;
	gap: 1px;
	padding: 6px 0 8px;
	writing-mode: vertical-rl;
	background: #dcdcdc;
	border: 1px solid #c3c3c3;
	border-right: 0;
}
.dock svg{
	width: 16px;
	height: 16px;
}

/* janelas */
.window{
	position: absolute;
	display: flex;
	flex-direction: column;
	background: #efefef;
	border: 2px solid #dadada;
}
.employee{
	top: 5px;
	right: 224px;
	bottom: 0;
	left: 230px;
	border-bottom: 0;
}
.win-title{
	display: flex;
	align-items: center;
	justify-content: space-between;
	height: 25px;
	padding: 0 7px;
	font-size: 11px;
	font-weight: bold;
	background: #dcdcdc;
	border-top: 1px solid #c6c6c6;
	border-bottom: 1px solid #a0a0a0;
}
.win-btns{
	display: flex;
	gap: 10px;
	color: #555;
}
.win-btns svg{
	width: 10px;
	height: 10px;
}
.employee-body{
	display: flex;
	flex: 1;
	min-height: 0;
	padding-left: 16px;
}
.side{
	width: 163px;
	padding-top: 10px;
	overflow: hidden;
	color: #000;
}
.side-group{
	margin-bottom: 5px;
}
.side h2{
	display: flex;
	align-items: center;
	justify-content: space-between;
	height: 22px;
	padding: 0 4px 0 8px;
	font-size: 11px;
	font-weight: bold;
	background: linear-gradient(to right, #7f7f7f, #d2d2d2);
	border-radius: 3px 3px 0 0;
}
.side h2 span{
	width: 131px;
	overflow: hidden;
	white-space: nowrap;
}
.side h2 svg{
	width: 18px;
	height: 18px;
}
.side ul{
	padding: 5px 0 4px 22px;
	border: 1px solid #fff;
	border-top: 0;
}
.side li{
	line-height: 18px;
	white-space: nowrap;
}
.side a.current{
	color: #555;
	text-decoration: underline;
}
.side-scroll{
	flex: none;
	width: 15px;
	margin: 7px 0 0 11px;
}
.loans{
	display: flex;
	flex-direction: column;
	flex: 1;
	min-width: 0;
	margin: 6px 6px 2px 4px;
	padding: 0 2px;
	border: 1px solid #dadada;
}
.loans legend{
	margin-left: 4px;
	padding: 0 2px;
	color: #111;
}
.loans-bars{
	background: #fff;
	border-top: 1px solid #a0a0a0;
}
.cols-btn{
	margin-left: 10px;
}
.loans-grid{
	flex: 1;
	min-height: 0;
	overflow: hidden;
	background: #fff;
	border-bottom: 1px solid #c9c9c9;
}
.l-a{ width: 22px; }
.l-b{ width: 41px; }
.l-c{ width: 130px; }
.l-d{ width: 119px; }
.l-e{ width: 87px; }
.loans-grid td{
	height: 41px;
	border-right: 1px solid #c9c9c9;
}
.loans-grid tr:nth-child(odd) td{
	background: #ebebeb;
}
.loans-grid tr:nth-child(n) td:first-child{
	background: #fff;
}
.loans-grid tr > :last-child{
	border-right: 0;
}
.loans-scroll{
	justify-content: space-between;
	height: 28px;
	padding: 11px 1px 0;
}
.win-foot{
	display: flex;
	justify-content: flex-end;
	gap: 8px;
	height: 32px;
	padding: 10px 16px 0 0;
}
.btn{
	width: 73px;
	height: 21px;
	background: #efefef;
	border: 1px solid #a8a8a8;
	outline: 1px solid #dedede;
	outline-offset: -2px;
}

/* empréstimo */
.loan{
	top: 182px;
	right: 303px;
	bottom: 8px;
	left: 452px;
	border-width: 4px 4px 3px 4px;
	border-color: #dcdcdc;
}
.loan .win-title{
	height: 22px;
	padding: 0 7px 3px 5px;
	background: #cedbf5;
	border-top: 0;
}
.loan .toolbar{
	height: 35px;
	margin-left: -2px;
	padding: 0 0 3px;
}
.loan .www{
	margin-left: 10px;
}
.www .caret{
	margin-left: 10px;
}
.loan-form{
	display: flex;
	flex-direction: column;
	flex: 1;
	margin: 0 6px 0 4px;
	padding: 3px 1px 2px 2px;
	background: #fff;
}
.form-tab{
	position: relative;
	align-self: flex-start;
	height: 22px;
	margin-bottom: -1px;
	padding: 2px 15px;
	font-family: "Liberation Sans", sans-serif;
	background: #fff;
	border: 1px solid #a0a0a0;
	border-bottom: 0;
	border-radius: 4px 4px 0 0;
}
.form-panel{
	flex: 1;
	padding: 15px 0 0 17px;
	font-family: "Liberation Sans", sans-serif;
	border: 1px solid #a0a0a0;
}
.field-row{
	display: grid;
	grid-template-columns: 214px 180px 1fr;
	margin-bottom: 7px;
}
.field-row.two{
	grid-template-columns: 225px 1fr;
}
.field-row.spaced{
	margin-bottom: 10px;
}
.field-row.tight{
	margin-bottom: 5px;
}
.field label{
	display: block;
	height: 15px;
	padding-left: 1px;
	line-height: 15px;
	white-space: nowrap;
}
.req label{
	font-weight: bold;
}
.span2{
	grid-column: span 2;
}
.span3{
	grid-column: span 3;
}
.line{
	display: flex;
	gap: 4px;
}
.line input{
	height: 20px;
	padding: 0 3px;
	background: #fff;
	border: 1px solid #7a7a7a;
}
.line .focus{
	border-color: #0078d7;
	outline: 0;
}
.w-key{ width: 70px; }
.w-saldo{ width: 72px; }
.w-code{ width: 135px; }
.w-type{ width: 218px; }
.w-event{ width: 257px; }
.w-value{ width: 131px; }
.w-parc{ width: 148px; }
.w-period{ width: 144px; }
.w-formula{ width: 301px; }
.w-obs{ width: 481px; }
.w-mat{ width: 91px; }
.w-num{ width: 247px; }
.more{
	width: 19px;
	height: 19px;
	margin: 1px 0 0 1px;
	line-height: 16px;
	background: #e1e1e1;
	border: 1px solid #adadad;
}
.date{
	display: flex;
	width: 144px;
	height: 20px;
	border: 1px solid #7a7a7a;
}
.date.wide{
	width: 149px;
}
.date input{
	flex: 1;
	min-width: 0;
	padding: 0 2px;
	color: #000;
	border: 0;
}
.date button{
	display: flex;
	align-items: center;
	justify-content: center;
	width: 34px;
	border-left: 1px solid #7a7a7a;
}
.date svg{
	width: 24px;
	height: 16px;
}
.check{
	display: flex;
	align-items: center;
	gap: 6px;
	margin: 15px 0 5px;
}
.check input{
	width: 13px;
	height: 13px;
	appearance: none;
	background: #fff;
	border: 1px solid #333;
}
.disabled{
	color: #a0a0a0;
}
.disabled.two{
	grid-template-columns: 232px 1fr;
	margin-bottom: 0;
}
.disabled .line input{
	background: #efefef;
	border-color: #c9c9c9;
}
.loan .win-foot{
	height: 36px;
}

.hl{
	position: absolute;
	border: 3px solid #f00;
}
.hl-add{
	top: 75px;
	left: 441px;
	width: 35px;
	height: 46px;
}
.hl-menu{
	top: 439px;
	left: 263px;
	width: 86px;
	height: 31px;
}
.hl-loan{
	top: 183px;
	right: 303px;
	bottom: 8px;
	left: 456px;
}
.cursor{
	position: absolute;
	top: 545px;
	left: 988px;
	width: 12px;
	height: 20px;
}
```
